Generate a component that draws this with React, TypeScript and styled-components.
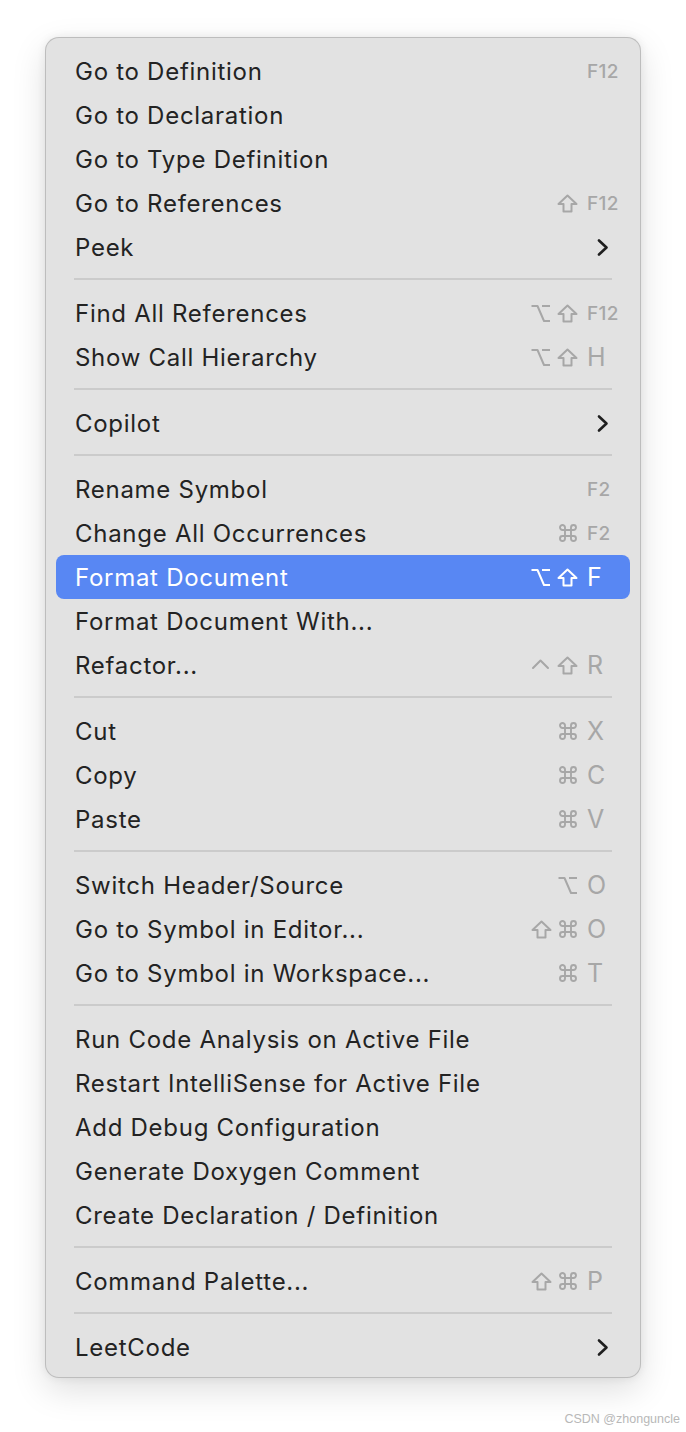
import styled, { createGlobalStyle } from "styled-components";

const Global = createGlobalStyle`
  html, body {
    margin: 0;
    padding: 0;
    background: #ffffff;
  }
  * {
    box-sizing: border-box;
  }
`;

const Page = styled.div`
  width: 686px;
  min-height: 1432px;
  padding: 37px 0 0 45px;
  font-family: Inter, "Noto Sans", sans-serif;
`;

const Menu = styled.div`
  width: 596px;
  padding: 11px 10px 8px;
  background: #e2e2e2;
  border: 1px solid rgba(0, 0, 0, 0.16);
  border-radius: 14px;
  box-shadow: 0 12px 34px rgba(0, 0, 0, 0.13), 0 0 10px rgba(0, 0, 0, 0.07);
  display: flex;
  flex-direction: column;
`;

const Row = styled.div<{ $active?: boolean }>`
  height: 44px;
  display: flex;
  align-items: center;
  justify-content: space-between;
  padding: 0 12px 0 19px;
  border-radius: 8px;
  background: ${({ $active }) => ($active ? "#5887f3" : "transparent")};
  color: ${({ $active }) => ($active ? "#ffffff" : "#232323")};
`;

const Label = styled.span`
  font-size: 24px;
  letter-spacing: 0.72px;
  white-space: nowrap;
`;

const Shortcut = styled.span<{ $active?: boolean }>`
  display: flex;
  align-items: center;
  color: ${({ $active }) => ($active ? "#ffffff" : "#a7a7a7")};
`;

const Mods = styled.span`
  display: flex;
  align-items: center;
  gap: 6px;
  margin-right: 9px;
`;

const Key = styled.span<{ $small?: boolean }>`
  width: 31px;
  text-align: left;
  font-size: ${({ $small }) => ($small ? "19px" : "25px")};
  font-weight: ${({ $small }) => ($small ? 500 : 400)};
  letter-spacing: ${({ $small }) => ($small ? "0.3px" : "0")};
  line-height: 1;
`;

const Separator = styled.div`
  height: 2px;
  margin: 9px 18px 11px;
  background: #cbcbcb;
`;

const Arrow = styled.svg`
  margin-right: 9px;
`;

const Watermark = styled.div`
  width: 635px;
  margin-top: 34px;
  text-align: right;
  font-family: "Liberation Sans", Arial, sans-serif;
  font-size: 12.5px;
  color: #b8b8b8;
`;

type Mod = "opt" | "shift" | "cmd" | "ctrl";

const ModIcon = ({ kind }: { kind: Mod }) => {
  const common = {
    fill: "none",
    stroke: "currentColor",
    strokeWidth: 2,
    strokeLinejoin: "round" as const,
    strokeLinecap: "round" as const,
  };
  if (kind === "shift")
    return (
      <svg width="21" height="19" viewBox="0 0 21 19">
        <path d="M10.5 1.5 L19.5 10 H14.5 V17.5 H6.5 V10 H1.5 Z" {...common} />
      </svg>
    );
  if (kind === "opt")
    return (
      <svg width="21" height="19" viewBox="0 0 21 19">
        <path d="M1.5 2 H7.5 L14 17 H20" {...common} strokeLinecap="butt" />
        <path d="M12 2 H20" {...common} strokeLinecap="butt" />
      </svg>
    );
  if (kind === "cmd")
    return (
      <svg width="20" height="20" viewBox="0 0 20 20">
        <path
          d="M7 4.5 a2.5 2.5 0 1 0 -2.5 2.5 H15.5 a2.5 2.5 0 1 0 -2.5 -2.5 V15.5 a2.5 2.5 0 1 0 2.5 -2.5 H4.5 a2.5 2.5 0 1 0 2.5 2.5 Z"
          {...common}
          strokeWidth={1.9}
        />
      </svg>
    );
  return (
    <svg width="21" height="19" viewBox="0 0 21 19">
      <path d="M3 12 L10.5 4.5 L18 12" {...common} />
    </svg>
  );
};

type Item = {
  label: string;
  mods?: Mod[];
  key?: string;
  submenu?: boolean;
  active?: boolean;
};

const groups: Item[][] = [
  [
    { label: "Go to Definition", key: "F12" },
    { label: "Go to Declaration" },
    { label: "Go to Type Definition" },
    { label: "Go to References", mods: ["shift"], key: "F12" },
    { label: "Peek", submenu: true },
  ],
  [
    { label: "Find All References", mods: ["opt", "shift"], key: "F12" },
    { label: "Show Call Hierarchy", mods: ["opt", "shift"], key: "H" },
  ],
  [{ label: "Copilot", submenu: true }],
  [
    { label: "Rename Symbol", key: "F2" },
    { label: "Change All Occurrences", mods: ["cmd"], key: "F2" },
    { label: "Format Document", mods: ["opt", "shift"], key: "F", active: true },
    { label: "Format Document With..." },
    { label: "Refactor...", mods: ["ctrl", "shift"], key: "R" },
  ],
  [
    { label: "Cut", mods: ["cmd"], key: "X" },
    { label: "Copy", mods: ["cmd"], key: "C" },
    { label: "Paste", mods: ["cmd"], key: "V" },
  ],
  [
    { label: "Switch Header/Source", mods: ["opt"], key: "O" },
    { label: "Go to Symbol in Editor...", mods: ["shift", "cmd"], key: "O" },
    { label: "Go to Symbol in Workspace...", mods: ["cmd"], key: "T" },
  ],
  [
    { label: "Run Code Analysis on Active File" },
    { label: "Restart IntelliSense for Active File" },
    { label: "Add Debug Configuration" },
    { label: "Generate Doxygen Comment" },
    { label: "Create Declaration / Definition" },
  ],
  [{ label: "Command Palette...", mods: ["shift", "cmd"], key: "P" }],
  [{ label: "LeetCode", submenu: true }],
];

const MenuRow = ({ item }: { item: Item }) => (
  <Row $active={item.active}>
    <Label>{item.label}</Label>
    {item.key && (
      <Shortcut $active={item.active}>
        {item.mods && (
          <Mods>
            {item.mods.map((m, i) => (
              <ModIcon key={i} kind={m} />
            ))}
          </Mods>
        )}
        <Key $small={item.key.startsWith("F") && item.key.length > 1}>{item.key}</Key>
      </Shortcut>
    )}
    {item.submenu && (
      <Arrow width="12" height="19" viewBox="0 0 12 19">
        <path
          d="M2 2.5 L9.5 9.5 L2 16.5"
          fill="none"
          stroke="#1f1f1f"
          strokeWidth="2.6"
          strokeLinecap="round"
          strokeLinejoin="round"
        />
      </Arrow>
    )}
  </Row>
);

export default function App() {
  return (
    <Page>
      <Global />
      <Menu>
        {groups.map((group, gi) => (
          <div key={gi}>
            {gi > 0 && <Separator />}
            {group.map((item) => (
              <MenuRow key={item.label} item={item} />
            ))}
          </div>
        ))}
      </Menu>
      <Watermark>CSDN @zhonguncle</Watermark>
    </Page>
  );
}
